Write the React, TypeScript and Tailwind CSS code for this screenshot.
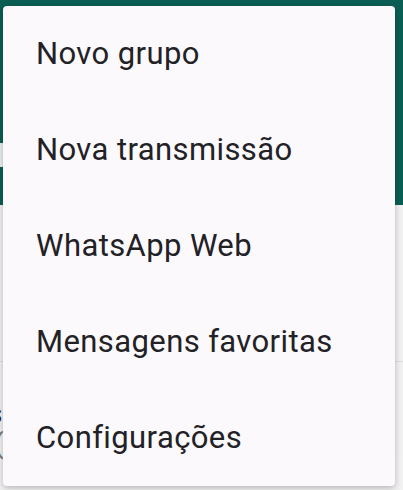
const items = [
  "Novo grupo",
  "Nova transmissão",
  "WhatsApp Web",
  "Mensagens favoritas",
  "Configurações",
];

export default function App() {
  return (
    <div className="relative h-[490px] w-[403px] overflow-hidden bg-[#f2f2f2] font-['Roboto',sans-serif]">
      {/* page under the menu */}
      <div className="relative h-[205px] bg-[#0b5e53]">
        <div className="absolute left-0 top-[143px] h-[24px] w-[6px] rounded-r-sm bg-[#e9efee]" />
      </div>
      <div className="flex flex-col bg-[#f1f1f1]">
        <div className="h-[157px] border-b border-[#dedede]" />
        <div className="pt-[38px] text-[28px] leading-[28px] text-[#222] -ml-[12px]">s</div>
        <div className="pt-[2px] text-[28px] leading-[28px] text-[#777] -ml-[6px]">(</div>
      </div>

      {/* dropdown menu */}
      <div className="absolute left-[3px] top-[6px] w-[392px] overflow-hidden rounded-[4px] bg-[#fbf9fc] shadow-[0_2px_6px_rgba(0,0,0,0.25)]">
        <ul className="flex flex-col">
          {items.map((item) => (
            <li
              key={item}
              className="flex h-[96px] items-center pl-[33px] text-[31px] font-normal tracking-[0.4px] text-[#222126]"
            >
              {item}
            </li>
          ))}
        </ul>
      </div>
    </div>
  );
}
